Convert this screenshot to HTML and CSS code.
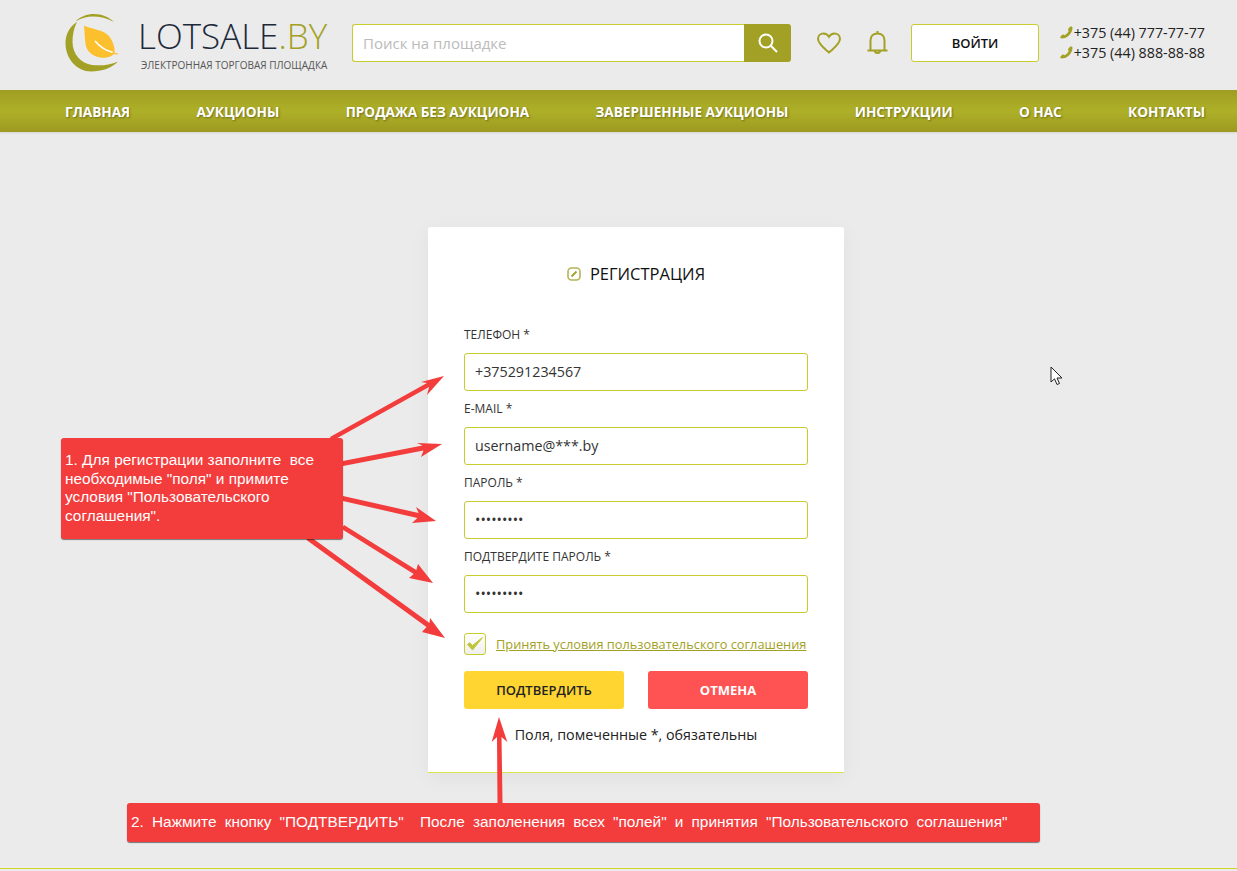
FILE: index.html
```html
<!DOCTYPE html>
<html lang="ru">
<head>
    <meta charset="UTF-8">
    <meta name="viewport" content="width=device-width, initial-scale=1.0">
    <title>Регистрация - LOTSALE.BY</title>
    <link rel="stylesheet" href="styles.css">
</head>
<body>
    <header class="header">
        <a href="#" class="brand">
            <svg class="brand-mark" width="56" height="62" viewBox="65 12 56 62">
                <path class="mark-olive" d="M77 22C70 26 65.500 34 65.500 43C65.500 59 77 71.500 91 71.500C102 71.500 112 68 118 61.500C110 65 101 66 92 65C81 63.500 72.500 54 72.500 42C72.500 34 74 28 77 22Z"/>
                <path class="mark-olive" d="M75.500 21.500C80 16.500 87 14 94 14C102 14 109 17 114 22C107 18 100 16.500 93 16.500C87 16.500 81 18 75.500 21.500Z"/>
                <path class="mark-leaf" d="M84 25.500C92 30 106 29 111 39C114 44 115 49 114.500 53C112 57 106 58.500 100 57.500C92 56 86.500 51 85.500 44C84.800 37 84.500 31 84 25.500Z"/>
                <path class="mark-vein" d="M95 41C100 47 107 51 113 52.500"/>
                <path class="mark-stem" d="M112 52.500L118 53.500L118 54.500L112 54Z"/>
            </svg>
            <span class="brand-text">
                <span class="brand-name">LOTSALE<em>.BY</em></span>
                <span class="brand-sub">Электронная торговая площадка</span>
            </span>
        </a>
        <form class="search">
            <input type="text" class="search-input" placeholder="Поиск на площадке">
            <button type="button" class="search-btn">
                <svg width="22" height="22" viewBox="0 0 22 22">
                    <circle class="icon-white" cx="9" cy="9" r="6.500"/>
                    <path class="icon-white" d="M13.800 13.800L20 20"/>
                </svg>
            </button>
        </form>
        <a href="#" class="icon-link icon-heart">
            <svg width="26" height="24" viewBox="0 0 26 24">
                <path class="icon-olive" d="M13 21.500C8 17 2 13 2 7.800C2 4.500 4.500 2.500 7.500 2.500C9.800 2.500 11.800 3.700 13 5.800C14.200 3.700 16.200 2.500 18.500 2.500C21.500 2.500 24 4.500 24 7.800C24 13 18 17 13 21.500Z"/>
            </svg>
        </a>
        <a href="#" class="icon-link icon-bell">
            <svg width="24" height="26" viewBox="0 0 24 26">
                <path class="icon-olive" d="M4.500 19.500V10.500C4.500 6 7.500 3.500 11.500 3.500C15.500 3.500 18.500 6 18.500 10.500V19.500M1.500 20.500H21.500M9 21C9 23.500 14 23.500 14 21M11.500 1V3.500"/>
            </svg>
        </a>
        <a href="#" class="login">Войти</a>
        <div class="phones">
            <div class="phone">
                <svg width="13" height="13" viewBox="0 0 13 13"><path class="icon-phone" d="M12.500 1.500C12.500 7.500 7.500 12.500 1.500 12.500C0.500 12.500 0 11.500 0.500 10.500L2 9C2.800 8.300 3.800 8.500 4.500 9.300C6.300 8.500 7.800 7 8.700 5C8 4.300 7.800 3.500 8.500 2.500L10 0.800C11 0 12.500 0.500 12.500 1.500Z"/></svg>
                +375 (44) 777-77-77
            </div>
            <div class="phone">
                <svg width="13" height="13" viewBox="0 0 13 13"><path class="icon-phone" d="M12.500 1.500C12.500 7.500 7.500 12.500 1.500 12.500C0.500 12.500 0 11.500 0.500 10.500L2 9C2.800 8.300 3.800 8.500 4.500 9.300C6.300 8.500 7.800 7 8.700 5C8 4.300 7.800 3.500 8.500 2.500L10 0.800C11 0 12.500 0.500 12.500 1.500Z"/></svg>
                +375 (44) 888-88-88
            </div>
        </div>
    </header>

    <nav class="nav">
        <a href="#">Главная</a>
        <a href="#">Аукционы</a>
        <a href="#">Продажа без аукциона</a>
        <a href="#">Завершенные аукционы</a>
        <a href="#">Инструкции</a>
        <a href="#">О нас</a>
        <a href="#">Контакты</a>
    </nav>

    <main class="main">
        <form class="card">
            <h1 class="card-title">
                <svg width="14" height="14" viewBox="0 0 14 14">
                    <rect class="title-box" x="1" y="1" width="12" height="12" rx="3.500"/>
                    <path class="title-pen" d="M4.500 9.500L9.500 4.500"/>
                </svg>
                Регистрация
            </h1>

            <label class="field-label">Телефон *</label>
            <input class="field" type="text" value="+375291234567">
            <label class="field-label">E-mail *</label>
            <input class="field" type="text" value="username@***.by">
            <label class="field-label">Пароль *</label>
            <input class="field" type="password" value="123456789">
            <label class="field-label">Подтвердите пароль *</label>
            <input class="field" type="password" value="123456789">

            <div class="agree">
                <span class="check">
                    <svg width="18" height="16" viewBox="0 0 18 16"><path class="check-mark" d="M1.500 8.500L6.500 14L16.500 1.500L6.500 9.500L3.500 6.800Z"/></svg>
                </span>
                <a href="#" class="agree-link">Принять условия пользовательского соглашения</a>
            </div>

            <div class="buttons">
                <button type="button" class="btn btn-confirm">Подтвердить</button>
                <button type="button" class="btn btn-cancel">Отмена</button>
            </div>

            <p class="note">Поля, помеченные *, обязательны</p>
        </form>
    </main>

    <!-- стрелки и подсказки поверх формы -->
    <svg class="arrows" width="1237" height="871" viewBox="0 0 1237 871">
        <path class="arrow" d="M330 437L427 383L421 382L444 376L427 395L429 387L332 441Z"/>
        <path class="arrow" d="M343 461L422.500 445.600L417 443L442 444L421 457L423.500 450.400L343 466Z"/>
        <path class="arrow" d="M343 496L418.600 513L416 507L436 521L412 523L417.400 518L343 501Z"/>
        <path class="arrow" d="M344 524.900L416.300 569.900L418 564L433 583L409 578L413.700 574.100L341.700 529.100Z"/>
        <path class="arrow" d="M309.500 536L429.500 623L430 618L445 638L422 632L426.500 627L306.500 540Z"/>
        <path class="arrow" d="M497.500 803L497 737L491.700 742L499 717L507.300 742L501.500 737L502.500 803Z"/>
    </svg>
    <div class="callout callout-one">1. Для регистрации заполните  все<br>необходимые "поля" и примите<br>условия "Пользовательского<br>соглашения".</div>
    <div class="callout callout-two">2. Нажмите кнопку "ПОДТВЕРДИТЬ"  После заполенения всех "полей" и принятия "Пользовательского соглашения"</div>

    <svg class="cursor" width="14" height="22" viewBox="0 0 14 22">
        <path class="cursor-arrow" d="M1 1V16L4.500 12.800L7 18.500L9.500 17.500L7 12H12Z"/>
    </svg>
</body>
</html>
```

FILE: styles.css
```css
* {
    box-sizing: border-box;
}

body {
    margin: 0;
    background-color: #ebebeb;
    color: #222;
    font-family: 'Open Sans', Arial, sans-serif;
    position: relative;
    height: 871px;
    overflow: hidden;
}

a {
    text-decoration: none;
    color: inherit;
}

/* шапка */
.header {
    display: flex;
    align-items: flex-start;
    height: 90px;
    padding: 24px 32px 0 65px;
}

.brand {
    display: flex;
    width: 287px;
    margin-top: -12px;
}

.brand-mark {
    flex: none;
}

.brand-text {
    display: flex;
    flex-direction: column;
    margin-left: 17px;
    padding-top: 2px;
}

.brand-name {
    font-size: 35px;
    font-weight: 300;
    line-height: 44px;
    color: #1c2a3a;
    white-space: nowrap;
}

.brand-name em {
    font-style: normal;
    color: #a3a125;
}

.brand-sub {
    font-size: 10px;
    line-height: 14px;
    text-transform: uppercase;
    color: #555;
    white-space: nowrap;
    margin-left: 3px;
}

.mark-olive {
    fill: #a3a125;
}

.mark-leaf,
.mark-stem {
    fill: #fcc02e;
}

.mark-vein {
    fill: none;
    stroke: #fff;
    stroke-width: 1.500;
}

.search {
    display: flex;
    width: 439px;
    height: 38px;
}

.search-input {
    flex: 1;
    min-width: 0;
    border: 1px solid #c8cc2e;
    border-right: none;
    border-radius: 3px 0 0 3px;
    padding: 0 10px;
    font-family: inherit;
    font-size: 15px;
    background: #fff;
    outline: none;
}

.search-input::placeholder {
    color: #bbb;
}

.search-btn {
    width: 47px;
    border: none;
    border-radius: 0 3px 3px 0;
    background-color: #a3a125;
    padding: 0;
    display: flex;
    align-items: center;
    justify-content: center;
}

.icon-white {
    fill: none;
    stroke: #fff;
    stroke-width: 2;
}

.icon-link {
    display: block;
    line-height: 0;
}

.icon-heart {
    margin: 7px 0 0 25px;
}

.icon-bell {
    margin: 6px 0 0 24px;
}

.icon-olive {
    fill: none;
    stroke: #a3a125;
    stroke-width: 2;
}

.login {
    width: 128px;
    height: 38px;
    margin-left: 21px;
    border: 1px solid #c8cc2e;
    border-radius: 3px;
    background: #fff;
    font-size: 13px;
    font-weight: 600;
    line-height: 36px;
    text-align: center;
    text-transform: uppercase;
    color: #111;
}

.phones {
    margin-left: auto;
    font-size: 14.300px;
    line-height: 20px;
    color: #222;
    margin-top: -1px;
}

.phone {
    white-space: nowrap;
}

.phone svg {
    vertical-align: -1px;
    margin-right: -3px;
}

.icon-phone {
    fill: #a3a125;
}

/* меню */
.nav {
    display: flex;
    justify-content: space-between;
    align-items: center;
    height: 42px;
    padding: 1px 32px 0 65px;
    background: linear-gradient(to bottom, #a09d22 0%, #aeb028 50%, #9d9a20 100%);
    box-shadow: 0 1px 2px rgba(0,0,0,.1);
}

.nav a {
    font-size: 13.600px;
    font-weight: 700;
    text-transform: uppercase;
    color: #fff;
    text-shadow: 1px 1px 2px rgba(0,0,0,.35);
    white-space: nowrap;
}

/* форма */
.main {
    display: flex;
    justify-content: center;
    align-items: flex-start;
    height: 737px;
    padding: 95px 0 0 35px;
    border-bottom: 1px solid #d0d425;
}

.card {
    width: 416px;
    height: 546px;
    padding: 0 36px;
    background-color: #fff;
    border-radius: 3px 3px 0 0;
    border-bottom: 1px solid #dfe24f;
    box-shadow: 0 5px 20px rgba(0,0,0,.05);
}

.card-title {
    display: flex;
    align-items: center;
    justify-content: center;
    gap: 9px;
    height: 94px;
    margin: 0;
    padding-bottom: 1px;
    font-size: 16.500px;
    font-weight: 500;
    text-transform: uppercase;
    color: #111;
}

.title-box {
    fill: none;
    stroke: #b5b455;
    stroke-width: 1.600;
}

.title-pen {
    fill: none;
    stroke: #a3a125;
    stroke-width: 1.800;
}

.field-label {
    display: block;
    height: 32px;
    padding-top: 5px;
    font-size: 12px;
    line-height: 18px;
    text-transform: uppercase;
    color: #333;
}

.field {
    display: block;
    width: 100%;
    height: 38px;
    margin-bottom: 4px;
    padding: 0 10px 2px 10px;
    border: 1px solid #c8cc2e;
    border-radius: 3px;
    background: #fff;
    font-family: inherit;
    font-size: 14.300px;
    color: #333;
    outline: none;
}

.agree {
    display: flex;
    align-items: center;
    gap: 10px;
    height: 22px;
    margin-top: 20px;
}

.check {
    display: flex;
    align-items: center;
    justify-content: center;
    width: 22px;
    height: 22px;
    border: 1px solid #c8cc2e;
    border-radius: 3px;
    background: linear-gradient(to bottom, #fff, #efefef);
}

.check-mark {
    fill: #c0c63a;
    stroke: #c0c63a;
    stroke-width: 1;
}

.agree-link {
    font-size: 12.800px;
    color: #a3a125;
    text-decoration: underline;
    white-space: nowrap;
}

.buttons {
    display: flex;
    justify-content: space-between;
    margin-top: 16px;
}

.btn {
    width: 160px;
    height: 38px;
    border: none;
    border-radius: 3px;
    font-family: inherit;
    font-size: 13px;
    text-transform: uppercase;
    padding: 0;
}

.btn-confirm {
    background-color: #ffd631;
    color: #222;
    font-weight: 600;
}

.btn-cancel {
    background-color: #ff5252;
    color: #fff;
    font-weight: 700;
}

.note {
    margin: 16px 0 0 0;
    font-size: 14.300px;
    line-height: 20px;
    text-align: center;
    color: #222;
}

/* подсказки */
.arrows {
    position: absolute;
    left: 0;
    top: 0;
    pointer-events: none;
}

.arrow {
    fill: #f33c3c;
}

.callout {
    position: absolute;
    background-color: #f33c3c;
    border-radius: 3px;
    box-shadow: 0 1px 1px rgba(0,0,0,.5);
    color: #fff;
    font-family: 'Liberation Sans', Arial, sans-serif;
    font-size: 15.400px;
    white-space: pre-wrap;
}

.callout-one {
    left: 61px;
    top: 438px;
    width: 282px;
    height: 101px;
    padding: 13px 4px 0 4px;
    line-height: 18.700px;
}

.callout-two {
    left: 127px;
    top: 803px;
    width: 913px;
    height: 39px;
    padding: 0 4px;
    line-height: 38px;
    word-spacing: 3.850px;
    white-space: pre;
}

.cursor {
    position: absolute;
    left: 1050px;
    top: 366px;
}

.cursor-arrow {
    fill: #fff;
    stroke: #222;
    stroke-width: 1;
}
```
